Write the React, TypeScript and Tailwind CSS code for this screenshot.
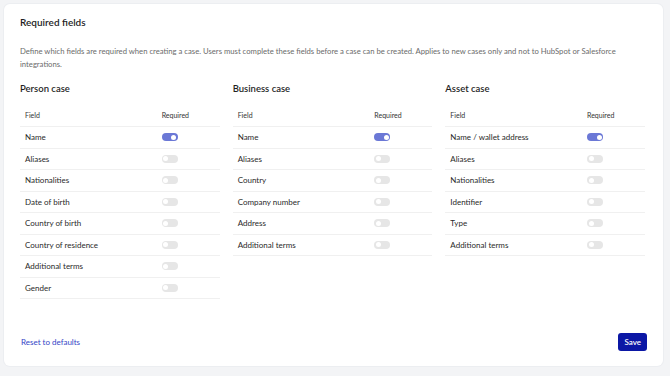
import React from "react";

type Field = { label: string; required: boolean };

const sections: { title: string; fields: Field[] }[] = [
  {
    title: "Person case",
    fields: [
      { label: "Name", required: true },
      { label: "Aliases", required: false },
      { label: "Nationalities", required: false },
      { label: "Date of birth", required: false },
      { label: "Country of birth", required: false },
      { label: "Country of residence", required: false },
      { label: "Additional terms", required: false },
      { label: "Gender", required: false },
    ],
  },
  {
    title: "Business case",
    fields: [
      { label: "Name", required: true },
      { label: "Aliases", required: false },
      { label: "Country", required: false },
      { label: "Company number", required: false },
      { label: "Address", required: false },
      { label: "Additional terms", required: false },
    ],
  },
  {
    title: "Asset case",
    fields: [
      { label: "Name / wallet address", required: true },
      { label: "Aliases", required: false },
      { label: "Nationalities", required: false },
      { label: "Identifier", required: false },
      { label: "Type", required: false },
      { label: "Additional terms", required: false },
    ],
  },
];

const Toggle: React.FC<{ on: boolean }> = ({ on }) => (
  <span
    className={`flex h-[8px] w-[16px] items-center rounded-full px-[1.5px] ${
      on ? "justify-end bg-[#6b78d6]" : "justify-start bg-[#e6e6e6]"
    }`}
  >
    <span className="h-[5px] w-[5px] rounded-full bg-white" />
  </span>
);

const App: React.FC = () => {
  return (
    <div className="min-h-screen bg-[#f3f4f6] p-[4px] font-['Lato',sans-serif] text-[#1f1f1f]">
      <div className="flex h-[362px] w-[659px] flex-col rounded-[6px] bg-white px-[16px] pt-[12px] pb-[15px] shadow-[0_0_0_1px_#eceef1]">
        <h1 className="text-[10px] font-semibold leading-[12px]">Required fields</h1>

        <p className="mt-[17px] text-[7.7px] leading-[13px] text-[#6b6b6b]">
          Define which fields are required when creating a case. Users must complete these fields before a case
          can be created. Applies to new cases only and not to HubSpot or Salesforce integrations.
        </p>

        {/* Sections */}
        <div className="mt-[12px] grid w-[625px] grid-cols-3 gap-x-[13px]">
          {sections.map((section) => (
            <div key={section.title}>
              <h2 className="text-[9.5px] font-semibold leading-[12px]">{section.title}</h2>
              <div className="mt-[10px] flex h-[22px] items-center border-b border-[#f0f0f0] px-[5px] text-[7px] text-[#333]">
                <span className="flex-1">Field</span>
                <span className="w-[53px]">Required</span>
              </div>
              {section.fields.map((f) => (
                <div
                  key={f.label}
                  className="flex h-[21.5px] items-center border-b border-[#f0f0f0] px-[5px] text-[8px] text-[#2a2a2a]"
                >
                  <span className="flex-1">{f.label}</span>
                  <span className="w-[53px]">
                    <Toggle on={f.required} />
                  </span>
                </div>
              ))}
            </div>
          ))}
        </div>

        {/* Footer */}
        <div className="mt-auto flex items-center justify-between">
          <button className="pl-[1px] text-[8px] text-[#3445c6]">Reset to defaults</button>
          <button className="h-[18px] rounded-[3px] bg-[#0b17a5] px-[6px] text-[8px] font-semibold text-white">
            Save
          </button>
        </div>
      </div>
    </div>
  );
};

export default App;
